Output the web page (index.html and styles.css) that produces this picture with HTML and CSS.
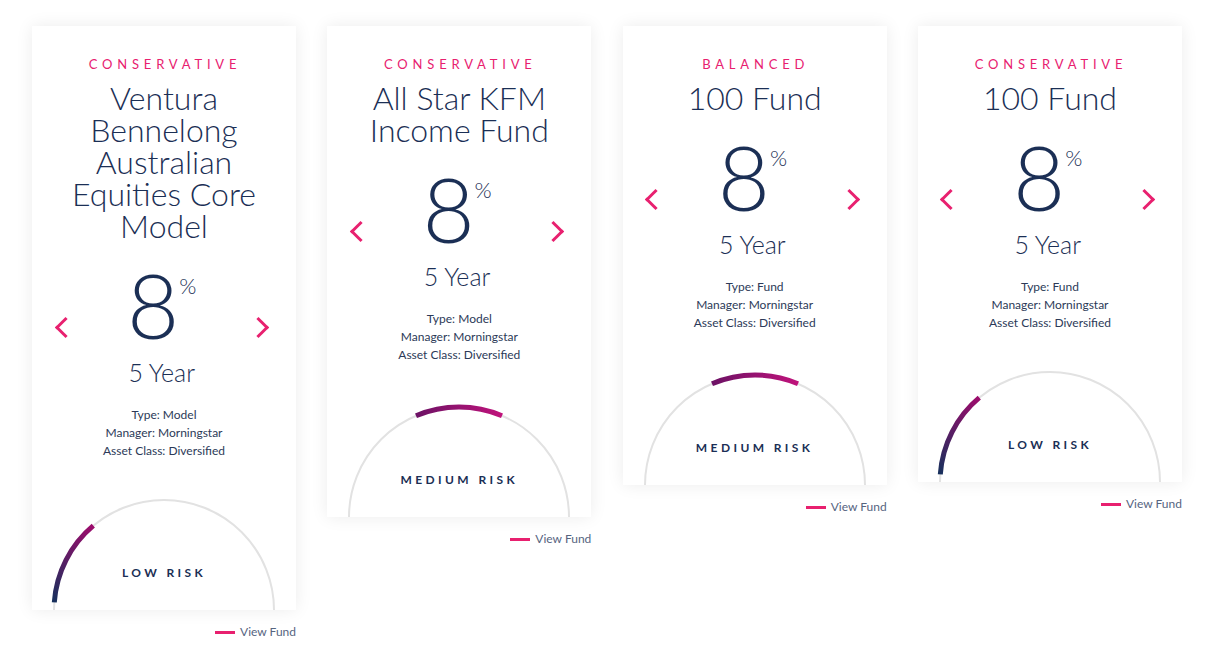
FILE: index.html
```html
<!DOCTYPE html>
<html lang="en">
<head>
    <meta charset="UTF-8">
    <meta name="viewport" content="width=device-width, initial-scale=1.0">
    <title>Funds</title>
    <link rel="stylesheet" href="styles.css">
</head>
<body>
    <div class="fund-list">
        <!-- 1 -->
        <div class="fund">
            <div class="card">
                <div class="card-body">
                    <div class="risk-tag">Conservative</div>
                    <h2 class="fund-name">Ventura Bennelong Australian Equities Core Model</h2>
                    <div class="return-row">
                        <span class="arrow arrow-left"></span>
                        <div class="return">
                            <div class="rate">8<sup>%</sup></div>
                            <div class="period">5 Year</div>
                        </div>
                        <span class="arrow arrow-right"></span>
                    </div>
                    <div class="details">
                        <div>Type: Model</div>
                        <div>Manager: Morningstar</div>
                        <div>Asset Class: Diversified</div>
                    </div>
                </div>
                <div class="gauge">
                    <svg width="232" height="116" viewBox="0 0 232 116">
                        <defs>
                            <linearGradient id="lowGrad1" gradientUnits="userSpaceOnUse" x1="6" y1="110" x2="45" y2="32">
                                <stop offset="0" stop-color="#14315c"/>
                                <stop offset="1" stop-color="#9c0c6c"/>
                            </linearGradient>
                        </defs>
                        <path class="track" d="M 6 116 A 110 110 0 0 1 226 116"/>
                        <path class="level" stroke="url(#lowGrad1)" d="M 6.3 108.3 A 110 110 0 0 1 45.3 31.7"/>
                    </svg>
                    <div class="gauge-label">Low Risk</div>
                </div>
            </div>
            <a class="view-link" href="#">View Fund</a>
        </div>

        <!-- 2 -->
        <div class="fund">
            <div class="card">
                <div class="card-body">
                    <div class="risk-tag">Conservative</div>
                    <h2 class="fund-name">All Star KFM Income Fund</h2>
                    <div class="return-row">
                        <span class="arrow arrow-left"></span>
                        <div class="return">
                            <div class="rate">8<sup>%</sup></div>
                            <div class="period">5 Year</div>
                        </div>
                        <span class="arrow arrow-right"></span>
                    </div>
                    <div class="details">
                        <div>Type: Model</div>
                        <div>Manager: Morningstar</div>
                        <div>Asset Class: Diversified</div>
                    </div>
                </div>
                <div class="gauge">
                    <svg width="232" height="119" viewBox="0 -3 232 119">
                        <defs>
                            <linearGradient id="medGrad2" gradientUnits="userSpaceOnUse" x1="73" y1="15" x2="159" y2="15">
                                <stop offset="0" stop-color="#6c1265"/>
                                <stop offset="1" stop-color="#c0137b"/>
                            </linearGradient>
                        </defs>
                        <path class="track" d="M 6 116 A 110 110 0 0 1 226 116"/>
                        <path class="level" stroke="url(#medGrad2)" d="M 73 14.7 A 110 110 0 0 1 159 14.7"/>
                    </svg>
                    <div class="gauge-label">Medium Risk</div>
                </div>
            </div>
            <a class="view-link" href="#">View Fund</a>
        </div>

        <!-- 3 -->
        <div class="fund">
            <div class="card">
                <div class="card-body">
                    <div class="risk-tag">Balanced</div>
                    <h2 class="fund-name">100 Fund</h2>
                    <div class="return-row">
                        <span class="arrow arrow-left"></span>
                        <div class="return">
                            <div class="rate">8<sup>%</sup></div>
                            <div class="period">5 Year</div>
                        </div>
                        <span class="arrow arrow-right"></span>
                    </div>
                    <div class="details">
                        <div>Type: Fund</div>
                        <div>Manager: Morningstar</div>
                        <div>Asset Class: Diversified</div>
                    </div>
                </div>
                <div class="gauge">
                    <svg width="232" height="119" viewBox="0 -3 232 119">
                        <defs>
                            <linearGradient id="medGrad3" gradientUnits="userSpaceOnUse" x1="73" y1="15" x2="159" y2="15">
                                <stop offset="0" stop-color="#6c1265"/>
                                <stop offset="1" stop-color="#c0137b"/>
                            </linearGradient>
                        </defs>
                        <path class="track" d="M 6 116 A 110 110 0 0 1 226 116"/>
                        <path class="level" stroke="url(#medGrad3)" d="M 73 14.7 A 110 110 0 0 1 159 14.7"/>
                    </svg>
                    <div class="gauge-label">Medium Risk</div>
                </div>
            </div>
            <a class="view-link" href="#">View Fund</a>
        </div>

        <!-- 4 -->
        <div class="fund">
            <div class="card">
                <div class="card-body">
                    <div class="risk-tag">Conservative</div>
                    <h2 class="fund-name">100 Fund</h2>
                    <div class="return-row">
                        <span class="arrow arrow-left"></span>
                        <div class="return">
                            <div class="rate">8<sup>%</sup></div>
                            <div class="period">5 Year</div>
                        </div>
                        <span class="arrow arrow-right"></span>
                    </div>
                    <div class="details">
                        <div>Type: Fund</div>
                        <div>Manager: Morningstar</div>
                        <div>Asset Class: Diversified</div>
                    </div>
                </div>
                <div class="gauge">
                    <svg width="232" height="116" viewBox="0 0 232 116">
                        <defs>
                            <linearGradient id="lowGrad4" gradientUnits="userSpaceOnUse" x1="6" y1="110" x2="45" y2="32">
                                <stop offset="0" stop-color="#14315c"/>
                                <stop offset="1" stop-color="#9c0c6c"/>
                            </linearGradient>
                        </defs>
                        <path class="track" d="M 6 116 A 110 110 0 0 1 226 116"/>
                        <path class="level" stroke="url(#lowGrad4)" d="M 6.3 108.3 A 110 110 0 0 1 45.3 31.7"/>
                    </svg>
                    <div class="gauge-label">Low Risk</div>
                </div>
            </div>
            <a class="view-link" href="#">View Fund</a>
        </div>
    </div>
</body>
</html>
```

FILE: styles.css
```css
body {
    margin: 0;
    background-color: #fff;
    font-family: Lato, "Noto Sans", Arial, sans-serif;
    color: #1b2f55;
}
.fund-list {
    display: grid;
    grid-template-columns: repeat(4, 264px);
    column-gap: 31.33px;
    align-items: start;
    padding: 26px 32px;
}
.fund {
    display: flex;
    flex-direction: column;
}
.card {
    background-color: #fff;
    box-shadow: 0 0 16px rgba(0,0,0,0.08);
    overflow: hidden;
    text-align: center;
}
.card-body {
    padding: 30px 30px 0;
}
.risk-tag {
    color: #e8206f;
    font-size: 13px;
    line-height: 16px;
    letter-spacing: 4.8px;
    text-transform: uppercase;
    padding-left: 2px;
}
.fund-name {
    margin: 10px 0 0;
    font-size: 32px;
    line-height: 32px;
    font-weight: 300;
    color: #1b2f55;
}
.return-row {
    display: flex;
    align-items: center;
    justify-content: space-between;
    margin: 22px 0 0 -4.5px;
}
.return {
    flex: 1;
}
.rate {
    font-size: 90px;
    line-height: 80px;
    font-weight: 300;
}
.rate sup {
    font-size: 22px;
    line-height: 22px;
    vertical-align: top;
    position: relative;
    top: 11px;
}
.period {
    font-size: 25px;
    line-height: 28px;
    font-weight: 300;
    margin-top: 14px;
}
.arrow {
    width: 15px;
    height: 15px;
    margin-top: 5px;
    border-top: 3px solid #e8206f;
    border-left: 3px solid #e8206f;
    box-sizing: border-box;
}
.arrow-left {
    transform: rotate(-45deg);
}
.arrow-right {
    transform: rotate(135deg);
}
.details {
    margin-top: 20px;
    font-size: 12px;
    line-height: 18px;
    color: #2c3a58;
}
.gauge {
    position: relative;
    margin-top: 34px;
    display: flex;
    justify-content: center;
}
.gauge svg {
    display: block;
}
.track {
    fill: none;
    stroke: #e2e2e2;
    stroke-width: 2;
}
.level {
    fill: none;
    stroke-width: 5;
}
.gauge-label {
    position: absolute;
    left: 0;
    right: 0;
    bottom: 30px;
    font-size: 12px;
    font-weight: 700;
    letter-spacing: 3.4px;
    text-transform: uppercase;
    color: #1b2f55;
}
.view-link {
    align-self: flex-end;
    display: flex;
    align-items: center;
    margin-top: 15px;
    font-size: 12px;
    line-height: 14px;
    color: #56647f;
    text-decoration: none;
}
.view-link::before {
    content: "";
    width: 20px;
    height: 3px;
    margin-right: 5px;
    background-color: #e8206f;
}
```
